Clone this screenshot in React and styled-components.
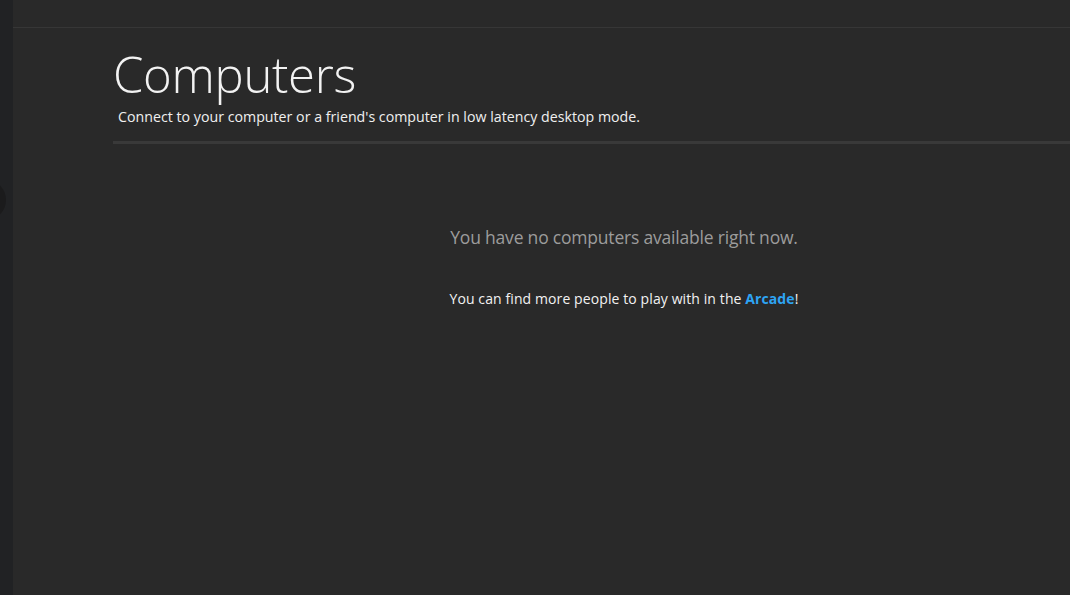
import styled, { createGlobalStyle } from "styled-components";

const GlobalStyle = createGlobalStyle`
  html, body {
    margin: 0;
    padding: 0;
    background: #292929;
    overflow: hidden;
  }
  body {
    font-family: "Open Sans", "Noto Sans", sans-serif;
  }
`;

export default function App() {
  return (
    <Page>
      <GlobalStyle />
      <Sidebar>
        <SideHandle />
      </Sidebar>
      <Main>
        <TopBar />
        <Content>
          <Header>
            <Title>Computers</Title>
            <Subtitle>
              Connect to your computer or a friend's computer in low latency desktop mode.
            </Subtitle>
          </Header>
          <Divider />
          <Empty>
            <EmptyTitle>You have no computers available right now.</EmptyTitle>
            <EmptyHint>
              You can find more people to play with in the <ArcadeLink href="#">Arcade</ArcadeLink>!
            </EmptyHint>
          </Empty>
        </Content>
      </Main>
    </Page>
  );
}

const Page = styled.div`
  display: flex;
  width: 1070px;
  height: 595px;
  overflow: hidden;
  background: #292929;
`;

const Sidebar = styled.div`
  position: relative;
  width: 13px;
  flex-shrink: 0;
  background: #212224;
`;

const SideHandle = styled.div`
  position: absolute;
  left: -34px;
  top: 180px;
  width: 40px;
  height: 40px;
  border-radius: 50%;
  background: #1b1b1c;
`;

const Main = styled.div`
  flex: 1;
  display: flex;
  flex-direction: column;
  min-width: 0;
`;

const TopBar = styled.div`
  height: 27px;
  flex-shrink: 0;
  border-bottom: 1px solid #363636;
`;

const Content = styled.div`
  width: 1022px;
  margin-left: 100px;
  flex-shrink: 0;
`;

const Header = styled.div`
  padding-top: 17px;
  height: 113px;
  box-sizing: border-box;
`;

const Title = styled.h1`
  margin: 0;
  font-family: "Open Sans", sans-serif;
  font-weight: 300;
  font-size: 49px;
  line-height: 58px;
  color: #f2f2f2;
  letter-spacing: -0.3px;
`;

const Subtitle = styled.p`
  margin: 4px 0 0 5px;
  font-family: "Open Sans", sans-serif;
  font-size: 14.2px;
  line-height: 20px;
  color: #f0f0f0;
  letter-spacing: 0.01px;
`;

const Divider = styled.div`
  height: 3px;
  background: #393939;
`;

const Empty = styled.div`
  display: flex;
  flex-direction: column;
  align-items: center;
  padding-top: 81px;
`;

const EmptyTitle = styled.p`
  margin: 0;
  font-family: "Open Sans", sans-serif;
  font-size: 17.5px;
  line-height: 24px;
  color: #9c9c9c;
  letter-spacing: -0.2px;
`;

const EmptyHint = styled.p`
  margin: 40px 0 0;
  font-family: "Open Sans", sans-serif;
  font-size: 14px;
  line-height: 20px;
  color: #f2f2f2;
  letter-spacing: 0.1px;
`;

const ArcadeLink = styled.a`
  color: #2ea4f4;
  font-weight: 700;
  text-decoration: none;
`;
